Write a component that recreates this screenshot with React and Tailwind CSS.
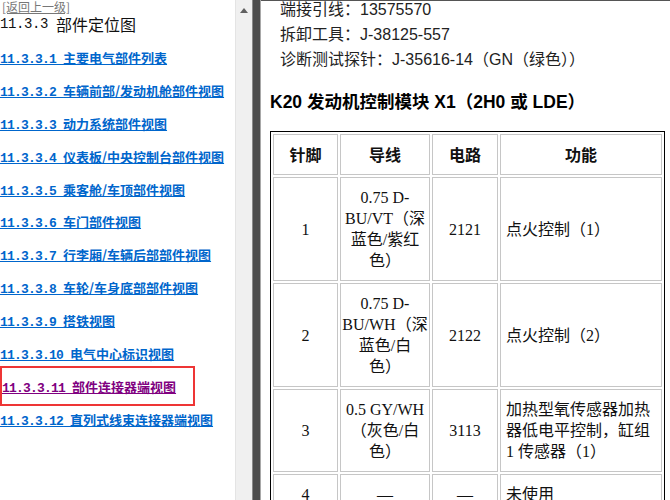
const links = [
  { num: '11.3.3.1', label: '主要电气部件列表' },
  { num: '11.3.3.2', label: '车辆前部/发动机舱部件视图' },
  { num: '11.3.3.3', label: '动力系统部件视图' },
  { num: '11.3.3.4', label: '仪表板/中央控制台部件视图' },
  { num: '11.3.3.5', label: '乘客舱/车顶部件视图' },
  { num: '11.3.3.6', label: '车门部件视图' },
  { num: '11.3.3.7', label: '行李厢/车辆后部部件视图' },
  { num: '11.3.3.8', label: '车轮/车身底部部件视图' },
  { num: '11.3.3.9', label: '搭铁视图' },
  { num: '11.3.3.10', label: '电气中心标识视图' },
  { num: '11.3.3.11', label: '部件连接器端视图', visited: true },
  { num: '11.3.3.12', label: '直列式线束连接器端视图' },
]

const rows = [
  { pin: '1', wire: ['0.75 D-', 'BU/VT（深', '蓝色/紫红', '色）'], circuit: '2121', fn: ['点火控制（1）'] },
  { pin: '2', wire: ['0.75 D-', 'BU/WH（深', '蓝色/白', '色）'], circuit: '2122', fn: ['点火控制（2）'] },
  { pin: '3', wire: ['0.5 GY/WH', '（灰色/白', '色）'], circuit: '3113', fn: ['加热型氧传感器加热', '器低电平控制，缸组', '1 传感器（1）'] },
  { pin: '4', wire: ['—'], circuit: '—', fn: ['未使用'] },
]

const cjk = { fontFamily: '"Noto Sans CJK SC", sans-serif' }
const mono = { fontFamily: '"Liberation Mono", monospace' }

function Lines({ lines }) {
  return lines.map((line, i) => (
    <div key={i} className="whitespace-nowrap">
      {line}
    </div>
  ))
}

export default function App() {
  return (
    <div className="flex h-[500px] w-[670px] overflow-hidden bg-white text-[#111]">
      <aside className="w-[235px] shrink-0 overflow-hidden">
        <a
          href="#"
          className="block pl-[2px] text-[12px] leading-[14px] text-[#777] underline"
          style={cjk}
        >
          [返回上一级]
        </a>
        <h1 className="flex h-[20px] items-center text-[16px] font-normal whitespace-pre" style={cjk}>
          <span className="text-[14px] tracking-[-0.4px]" style={mono}>11.3.3 </span>
          部件定位图
        </h1>

        <ul className="mt-[8.5px] flex flex-col">
          {links.map((link) => (
            <li key={link.num} className="relative flex h-[32.9px] items-center">
              {link.visited && (
                <div className="pointer-events-none absolute -top-[5px] left-0 h-[40px] w-[195px] border-2 border-[#ee3535]" />
              )}
              <a
                href="#"
                className={`whitespace-pre text-[13px] leading-[16px] font-bold underline ${
                  link.visited ? 'pl-[2px] text-[#800080]' : 'text-[#0066cc]'
                }`}
                style={cjk}
              >
                <span className="tracking-[-0.8px]" style={mono}>
                  {link.num}{' '}
                </span>
                {link.label}
              </a>
            </li>
          ))}
        </ul>
      </aside>

      <div className="relative w-[17px] shrink-0 border-l border-[#e4e4e4] bg-[#f0f0f0]">
        <svg className="absolute left-[4px] top-[8px]" width="8" height="5" viewBox="0 0 8 5">
          <path d="M4 0 L8 5 L0 5 Z" fill="#606060" />
        </svg>
      </div>
      <div className="w-[9px] shrink-0 border-l border-[#8a8a8a] border-r border-r-[#a8a8a8] bg-[#4d4d4d]" />

      <main
        className="min-w-0 flex-1 overflow-hidden border-t border-[#555] pl-[9px]"
        style={{ fontFamily: '"Liberation Sans", "Noto Sans CJK SC", sans-serif' }}
      >
        <div className="-mt-[4px] pl-[10px] text-[16px] leading-[25px] text-[#222]">
          <p>端接引线：13575570</p>
          <p>拆卸工具：J-38125-557</p>
          <p>诊断测试探针：J-35616-14（GN（绿色））</p>
        </div>

        <h2 className="mt-[18px] text-[17.5px] leading-[25px] font-bold text-black">
          K20 发动机控制模块 X1（2H0 或 LDE）
        </h2>

        <table
          className="mt-[16px] w-[395px] border-separate border-spacing-[2px] border border-black text-[16px] leading-[21px] text-[#111]"
          style={{ fontFamily: '"Liberation Serif", "Noto Sans CJK SC", serif' }}
        >
          <thead>
            <tr>
              <th className="w-[65px] border border-[#c6c6c6] py-[9px] font-bold" style={cjk}>针脚</th>
              <th className="w-[90px] border border-[#c6c6c6] py-[9px] font-bold" style={cjk}>导线</th>
              <th className="w-[66px] border border-[#c6c6c6] py-[9px] font-bold" style={cjk}>电路</th>
              <th className="border border-[#c6c6c6] py-[9px] font-bold" style={cjk}>功能</th>
            </tr>
          </thead>
          <tbody>
            {rows.map((row) => (
              <tr key={row.pin}>
                <td className="border border-[#c6c6c6] py-[9px] text-center">{row.pin}</td>
                <td className="border border-[#c6c6c6] py-[9px] text-center">
                  <Lines lines={row.wire} />
                </td>
                <td className="border border-[#c6c6c6] py-[9px] text-center">{row.circuit}</td>
                <td className="border border-[#c6c6c6] px-[5px] py-[9px] text-left">
                  <Lines lines={row.fn} />
                </td>
              </tr>
            ))}
          </tbody>
        </table>
      </main>
    </div>
  )
}
